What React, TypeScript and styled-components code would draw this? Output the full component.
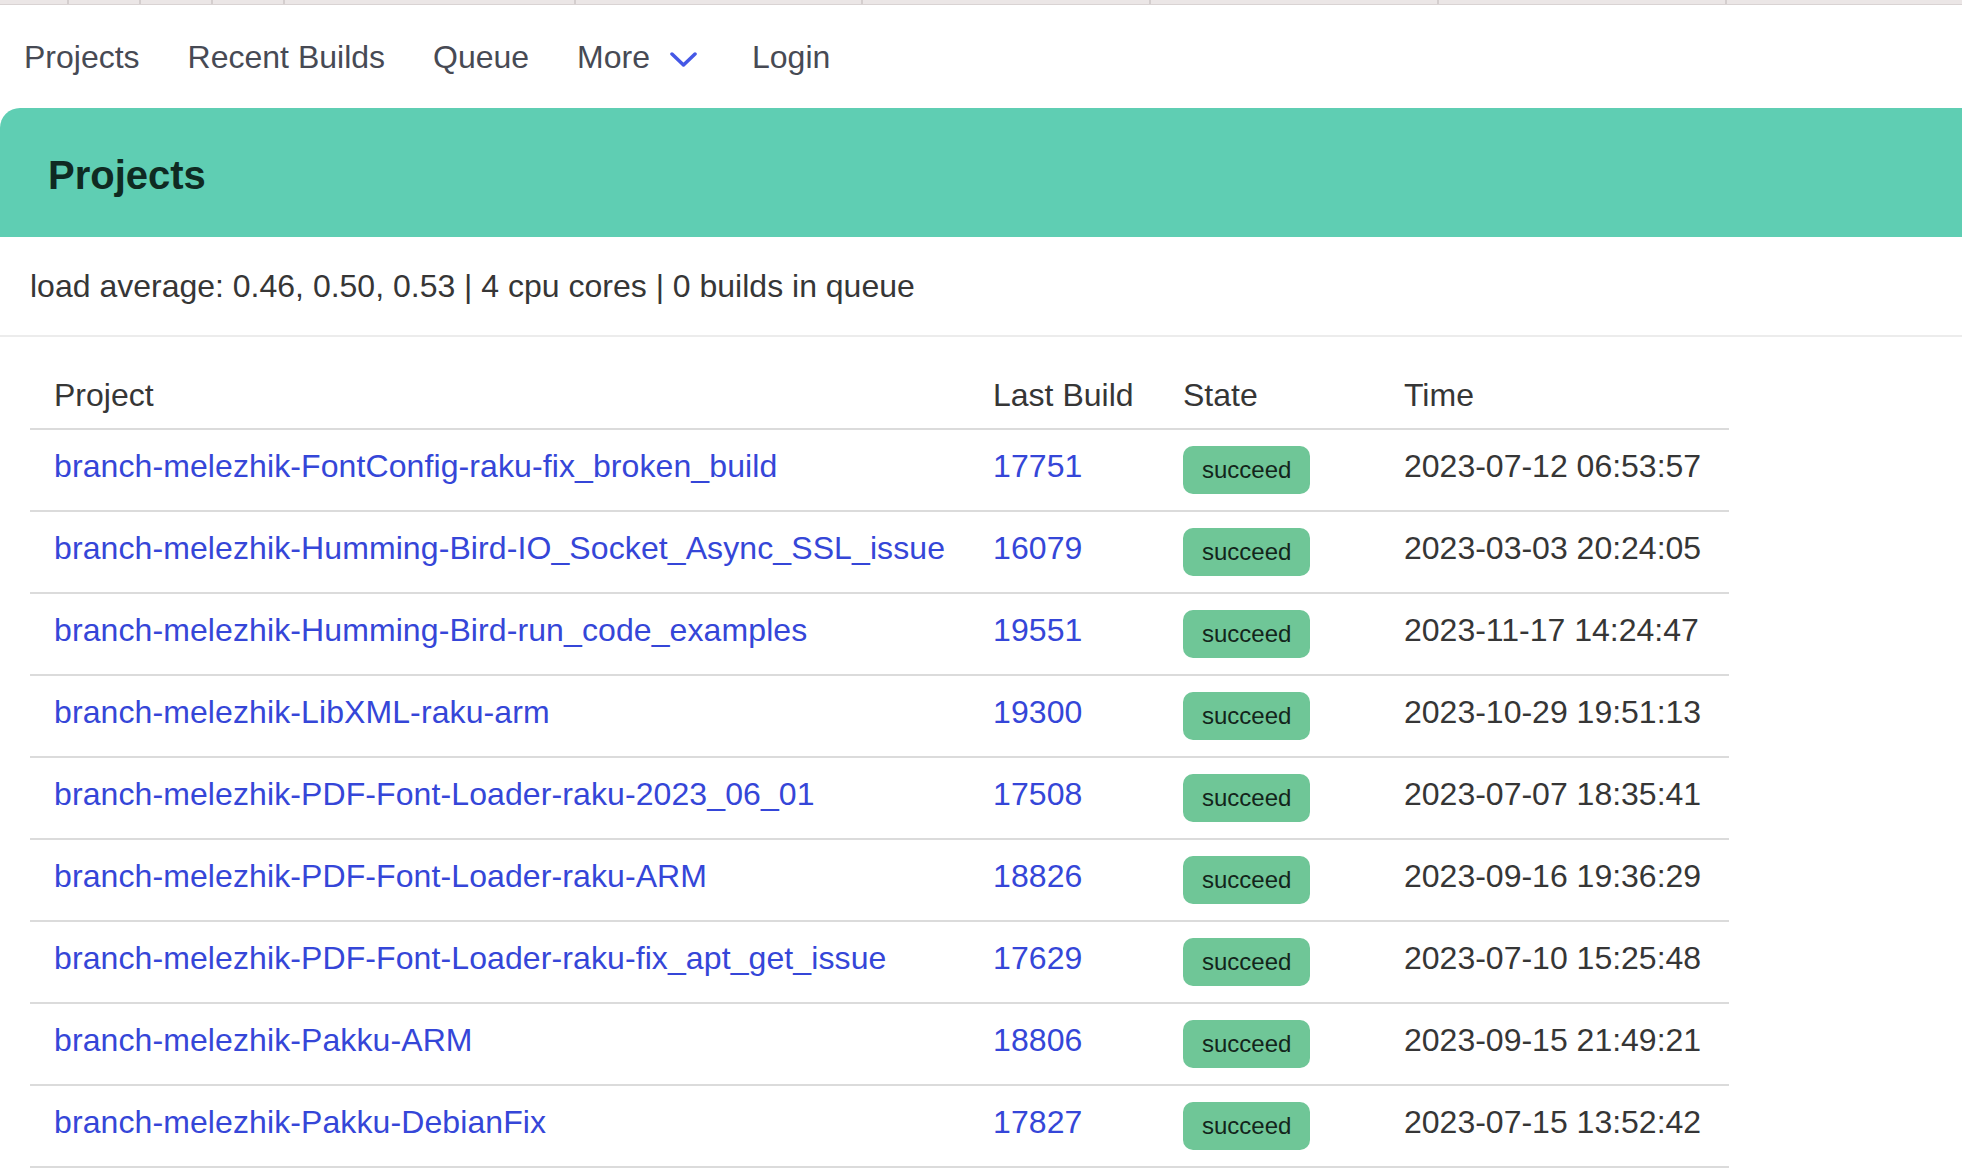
import React from "react";
import styled, { createGlobalStyle } from "styled-components";

const GlobalStyle = createGlobalStyle`
  body {
    margin: 0;
    background: #ffffff;
    font-family: "Liberation Sans", Arial, sans-serif;
    color: #363636;
  }
`;

interface Build {
  project: string;
  id: string;
  state: string;
  time: string;
}

const builds: Build[] = [
  { project: "branch-melezhik-FontConfig-raku-fix_broken_build", id: "17751", state: "succeed", time: "2023-07-12 06:53:57" },
  { project: "branch-melezhik-Humming-Bird-IO_Socket_Async_SSL_issue", id: "16079", state: "succeed", time: "2023-03-03 20:24:05" },
  { project: "branch-melezhik-Humming-Bird-run_code_examples", id: "19551", state: "succeed", time: "2023-11-17 14:24:47" },
  { project: "branch-melezhik-LibXML-raku-arm", id: "19300", state: "succeed", time: "2023-10-29 19:51:13" },
  { project: "branch-melezhik-PDF-Font-Loader-raku-2023_06_01", id: "17508", state: "succeed", time: "2023-07-07 18:35:41" },
  { project: "branch-melezhik-PDF-Font-Loader-raku-ARM", id: "18826", state: "succeed", time: "2023-09-16 19:36:29" },
  { project: "branch-melezhik-PDF-Font-Loader-raku-fix_apt_get_issue", id: "17629", state: "succeed", time: "2023-07-10 15:25:48" },
  { project: "branch-melezhik-Pakku-ARM", id: "18806", state: "succeed", time: "2023-09-15 21:49:21" },
  { project: "branch-melezhik-Pakku-DebianFix", id: "17827", state: "succeed", time: "2023-07-15 13:52:42" },
];

// widths of the cut-off tab strip above the page
const tabWidths = [69, 72, 72, 72, 291, 287, 288, 288, 288];

const TabStrip = styled.div`
  display: flex;
  height: 4px;
  background: #ebe6e6;
  border-bottom: 1px solid #d9d3d3;
`;

const TabStub = styled.div<{ $w: number }>`
  width: ${(p) => p.$w}px;
  flex: none;
  border-right: 2px solid #d4cece;
  box-sizing: border-box;
`;

const Navbar = styled.nav`
  display: flex;
  align-items: center;
  height: 103px;
`;

const NavItem = styled.a`
  display: flex;
  align-items: center;
  padding: 0 24px;
  font-size: 32px;
  line-height: 40px;
  color: #474a54;
  text-decoration: none;
  cursor: pointer;
`;

const DropdownItem = styled(NavItem)`
  padding-right: 31px;

  svg {
    margin-left: 20px;
    margin-top: 7px;
  }
`;

const Hero = styled.section`
  background: #5fceb3;
  border-top-left-radius: 20px;
  padding: 42px 48px 37px;
`;

const Title = styled.h1`
  margin: 0;
  font-size: 40px;
  line-height: 50px;
  font-weight: 700;
  color: #0f2a22;
`;

const Stats = styled.div`
  padding: 29px 30px;
  font-size: 32px;
  line-height: 40px;
  color: #363636;
  border-bottom: 2px solid #ececec;
`;

const TableWrap = styled.div`
  padding: 22px 30px 0;
`;

const Table = styled.table`
  table-layout: fixed;
  width: 1699px;
  border-collapse: collapse;
  font-size: 32px;

  th {
    text-align: left;
    font-weight: 400;
    color: #363636;
    line-height: 40px;
    padding: 16px 24px 13px;
    border-bottom: 2px solid #dbdbdb;
  }

  td {
    vertical-align: top;
    line-height: 40px;
    padding: 16px 24px;
    border-bottom: 2px solid #dbdbdb;
    color: #363636;
    white-space: nowrap;
  }
`;

const Link = styled.a`
  color: #3546d8;
  text-decoration: none;
  letter-spacing: 0.1px;
`;

const Tag = styled.span<{ $state: string }>`
  display: inline-flex;
  align-items: center;
  height: 48px;
  padding: 0 19px;
  border-radius: 10px;
  font-size: 24px;
  line-height: 1;
  background: ${(p) => (p.$state === "succeed" ? "#6fc697" : "#f14668")};
  color: #13251b;
`;

function Chevron() {
  return (
    <svg width="27" height="16" viewBox="0 0 27 16" fill="none">
      <polyline points="2,2 13.5,13 25,2" stroke="#4558e6" strokeWidth="3.5" strokeLinecap="round" strokeLinejoin="round" />
    </svg>
  );
}

export default function App() {
  return (
    <>
      <GlobalStyle />
      <TabStrip>
        {tabWidths.map((w, i) => (
          <TabStub key={i} $w={w} />
        ))}
      </TabStrip>
      <Navbar>
        <NavItem>Projects</NavItem>
        <NavItem>Recent Builds</NavItem>
        <NavItem>Queue</NavItem>
        <DropdownItem>
          More
          <Chevron />
        </DropdownItem>
        <NavItem>Login</NavItem>
      </Navbar>
      <Hero>
        <Title>Projects</Title>
      </Hero>
      <Stats>load average: 0.46, 0.50, 0.53 | 4 cpu cores | 0 builds in queue</Stats>
      <TableWrap>
        <Table>
          <colgroup>
            <col style={{ width: 939 }} />
            <col style={{ width: 190 }} />
            <col style={{ width: 221 }} />
            <col style={{ width: 349 }} />
          </colgroup>
          <thead>
            <tr>
              <th>Project</th>
              <th>Last Build</th>
              <th>State</th>
              <th>Time</th>
            </tr>
          </thead>
          <tbody>
            {builds.map((b) => (
              <tr key={b.project}>
                <td>
                  <Link>{b.project}</Link>
                </td>
                <td>
                  <Link>{b.id}</Link>
                </td>
                <td>
                  <Tag $state={b.state}>{b.state}</Tag>
                </td>
                <td>{b.time}</td>
              </tr>
            ))}
          </tbody>
        </Table>
      </TableWrap>
    </>
  );
}
